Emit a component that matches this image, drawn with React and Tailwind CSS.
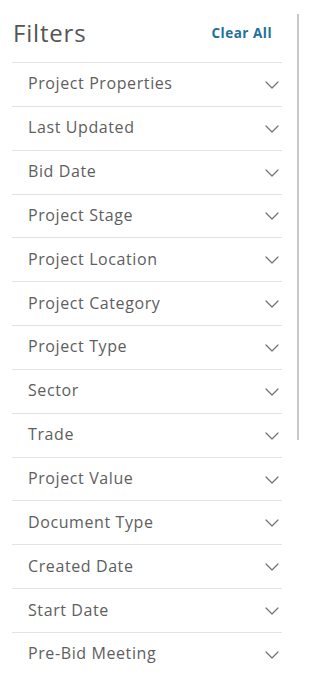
const FILTERS = [
  'Project Properties',
  'Last Updated',
  'Bid Date',
  'Project Stage',
  'Project Location',
  'Project Category',
  'Project Type',
  'Sector',
  'Trade',
  'Project Value',
  'Document Type',
  'Created Date',
  'Start Date',
  'Pre-Bid Meeting',
];

function Chevron() {
  return (
    <svg width="14" height="8" viewBox="0 0 14 8" fill="none" className="mt-[3px] shrink-0">
      <polyline points="1,1 7,7 13,1" stroke="#747474" strokeWidth="1.25" strokeLinecap="round" strokeLinejoin="round" />
    </svg>
  );
}

function FilterRow({ label }) {
  return (
    <button
      type="button"
      className="flex h-[43.85px] w-full items-center justify-between border-t border-[#e3e3e3] pb-[2px] pl-4 pr-[3px] text-left"
    >
      <span className="text-[16px] tracking-[0.6px] text-[#5e5e5e]">{label}</span>
      <Chevron />
    </button>
  );
}

export default function App() {
  return (
    <div className="relative h-[675px] w-[300px] overflow-hidden bg-white font-['Open_Sans',sans-serif]">
      <aside className="pl-3 pr-[18px]">
        <div className="flex h-[62px] items-center justify-between pl-px pr-2.5 pt-1">
          <h2 className="text-[24px] leading-none tracking-[0.8px] text-[#555]">Filters</h2>
          <button type="button" className="text-[13.5px] font-bold tracking-[0.5px] text-[#22719b]">
            Clear All
          </button>
        </div>
        {FILTERS.map((f) => (
          <FilterRow key={f} label={f} />
        ))}
      </aside>
      {/* scroll thumb */}
      <div className="absolute right-[1px] top-[14px] h-[426px] w-[2px] bg-[#c8c8c8]" />
    </div>
  );
}
